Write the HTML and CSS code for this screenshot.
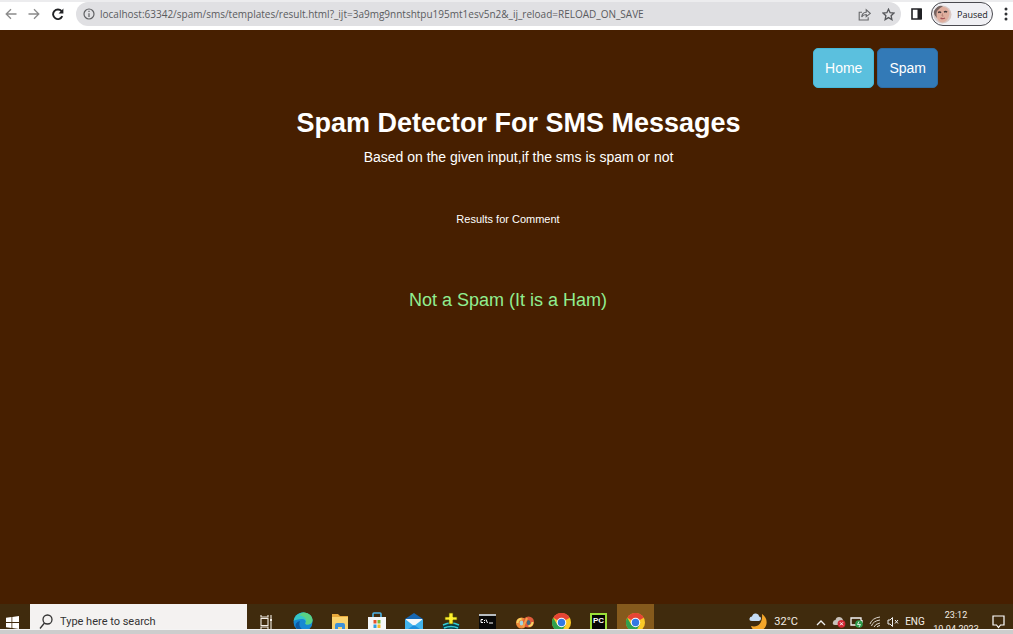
FILE: index.html
```html
<!DOCTYPE html>
<html lang="en">
<head>
<meta charset="utf-8">
<title>Spam Detector</title>
<link rel="stylesheet" href="styles.css">
</head>
<body>
<header class="toolbar">
  <button class="nav" aria-label="Back"><svg width="12" height="12" viewBox="0 0 12 12" fill="none" stroke="#8b8b8b" stroke-width="1.3"><path d="M11.5 6H1.5M6 1.2 1.2 6 6 10.8"/></svg></button>
  <button class="nav" aria-label="Forward"><svg width="12" height="12" viewBox="0 0 12 12" fill="none" stroke="#8b8b8b" stroke-width="1.3"><path d="M.5 6h10M6 1.2 10.8 6 6 10.8"/></svg></button>
  <button class="nav" aria-label="Reload"><svg width="12" height="13" viewBox="0 0 12 13" fill="none" stroke="#202124" stroke-width="1.9"><path d="M10.3 8.2A4.8 4.8 0 1 1 9.6 3.2"/><path d="M11.4.6v5H6.6z" fill="#202124" stroke="none"/></svg></button>
  <div class="address">
    <svg width="12" height="12" viewBox="0 0 12 12" fill="none" stroke="#606164" stroke-width="1.2"><circle cx="6" cy="6" r="5"/><path d="M6 5.2V9M6 2.8v1.3"/></svg>
    <input class="url" aria-label="Address" value="localhost:63342/spam/sms/templates/result.html?_ijt=3a9mg9nntshtpu195mt1esv5n2&amp;_ij_reload=RELOAD_ON_SAVE">
    <button class="mini" aria-label="Share"><svg width="13" height="13" viewBox="0 0 13 13" fill="none" stroke="#66676a" stroke-width="1.1"><path d="M4 4.2H1.2V12h9V9.2"/><path d="M3.7 9c.2-3 1.7-4.7 4.5-4.8V1.8L12.3 5.400 8.200 8.700V6.500C6 6.500 4.700 7.300 3.700 9z"/></svg></button>
    <button class="mini" aria-label="Bookmark"><svg width="13" height="13" viewBox="0 0 13 13" fill="none" stroke="#55565a" stroke-width="1.3"><path d="m6.500 1.200 1.600 3.500 3.800.4-2.800 2.600.8 3.900-3.400-2-3.400 2 .8-3.900L1.100 5.100l3.800-.4z"/></svg></button>
  </div>
  <button class="panel" aria-label="Side panel"><svg width="11" height="12" viewBox="0 0 11 12"><path d="M1 1h9v10H1z" fill="#fff" stroke="#202124" stroke-width="1.6"/><path d="M6.500 1H11v10H6.500z" fill="#202124"/></svg></button>
  <button class="profile"><svg width="19" height="19" viewBox="0 0 19 19"><circle cx="9.500" cy="9.500" r="9" fill="#d9c8c4"/><path d="M2 5Q6 .5 11 2q5 1 5.500 6-.3 5-3.500 8-4 3-7.500-.5Q2 11 2 5z" fill="#dfae9e"/><path d="M1 6Q5-.5 10 1.200 6 3 4 6q-1 3 0 7-4-3-3-7z" fill="#776460"/><path d="M5 7.500q2-1 3 .3M11 7q2-1 3 .2" stroke="#403638" stroke-width="1.400" fill="none"/><path d="M9.500 8.500 9 11h1.500" stroke="#b37f73" fill="none"/><path d="M7.500 13.200q2.500 1 4.500-.2" stroke="#a55255" stroke-width="1.300" fill="none"/></svg>Paused</button>
  <button class="more" aria-label="Menu"><svg width="4" height="14" viewBox="0 0 4 14" fill="#303134"><circle cx="2" cy="2" r="1.500"/><circle cx="2" cy="7" r="1.500"/><circle cx="2" cy="12" r="1.500"/></svg></button>
</header>

<main class="page">
  <nav class="links"><a class="btn home" href="#">Home</a><a class="btn spam" href="#">Spam</a></nav>
  <div class="intro">
    <h1>Spam Detector For SMS Messages</h1>
    <p class="lead">Based on the given input,if the sms is spam or not</p>
  </div>
  <p class="label">Results for Comment</p>
  <h2>Not a Spam (It is a Ham)</h2>
</main>

<footer class="taskbar">
  <div class="row">
    <button class="start" aria-label="Start"><svg width="13" height="13" viewBox="0 0 13 13" fill="#fff"><path d="M0 1.800 5.500 1v5H0zM6.300.9 13 0v6H6.300zM0 6.900h5.500v5L0 11.200zM6.300 6.900H13V13l-6.700-1z"/></svg></button>
    <label class="search"><svg width="14" height="16" viewBox="0 0 14 16" fill="none" stroke="#333" stroke-width="1.300"><circle cx="8.500" cy="5.500" r="4.500"/><path d="M5.500 9 1 14.500"/></svg><input placeholder="Type here to search" aria-label="Type here to search"></label>
    <button class="app" aria-label="Task view"><svg width="14" height="16" viewBox="0 0 14 16" fill="none" stroke="#f3eee6" stroke-width="1.100"><path d="M2 4.500h7v7H2zM2 1v2h7V1M2 15v-2h7v2M12 1v3M12 8v7"/><path d="M11 4.500h2v3h-2z" fill="#f3eee6" stroke="none"/></svg></button>
    <button class="app" aria-label="Edge"><svg width="20" height="20" viewBox="0 0 20 20"><circle cx="10" cy="10" r="9.500" fill="#1688d3"/><path d="M.6 9C1.500 3 6 .4 10.500.4c5.500 0 9 4 9 7.600 0 3-2.500 4.600-5 4.600-2 0-2.500-.8-2-1.600.8-1.500-.3-4-3.500-4-4 0-7 1-8.400 2z" fill="#35c5c6"/><path d="M10.500.4c5.500 0 9 4 9 7.600 0 3-2.500 4.600-5 4.600-2 0-2.500-.8-2-1.600 2-3-.5-7-6-7.500Q8 .6 10.500.4z" fill="#59d184"/><path d="M7 9c-2 5 1 9 6 9.500-7 2.500-12-3-10-7Q4.500 9 7 9z" fill="#0c59a4"/></svg></button>
    <button class="app" aria-label="File Explorer"><svg width="18" height="18" viewBox="0 0 18 18"><path d="M1 1h6l2 2h8v13H1z" fill="#e9a93b"/><path d="M1 4h16v13H1z" fill="#fbd36e"/><path d="M4 17v-5q0-2 2-2h6q2 0 2 2v5h-3v-3H7v3z" fill="#3d91d9"/></svg></button>
    <button class="app" aria-label="Store"><svg width="18" height="20" viewBox="0 0 18 20"><path d="M5 5V2q0-1 1-1h6q1 0 1 1v3" fill="none" stroke="#4db4e8" stroke-width="1.600"/><path d="M0 5h18v12q0 2-2 2H2q-2 0-2-2z" fill="#f4f6f8"/><path d="M5.500 8h3v3.500h-3z" fill="#e8512d"/><path d="M9.500 8h3v3.500h-3z" fill="#7bb832"/><path d="M5.500 12.500h3V16h-3z" fill="#2e9fe2"/><path d="M9.500 12.500h3V16h-3z" fill="#f5b928"/></svg></button>
    <button class="app" aria-label="Mail"><svg width="18" height="19" viewBox="0 0 18 19"><path d="M0 6 9 0l9 6v11H0z" fill="#1767b2"/><path d="M1 6h16v7H1z" fill="#f5f8fa"/><path d="m0 6 9 7 9-7v12H0z" fill="#42b4ee"/><path d="m0 18 9-6 9 6z" fill="#1e8edb"/></svg></button>
    <button class="app" aria-label="Downloads"><svg width="18" height="20" viewBox="0 0 18 20"><ellipse cx="9" cy="15" rx="8.500" ry="4.500" fill="#093e49"/><path d="M1 13q8-4 16 0M2 16q7-3 14 0M3 19q6-3 12 0" stroke="#35cad4" stroke-width="1.600" fill="none"/><path d="M7 1h4v4h4v3h-4v4H7V8H3V5h4z" fill="#fff02e" stroke="#514d00" stroke-width=".7"/></svg></button>
    <button class="app" aria-label="Command Prompt"><svg width="17" height="17" viewBox="0 0 17 17"><path d="M0 0h17v17H0z" fill="#090909"/><path d="M0 0h17v2H0z" fill="#b7bcc0"/><path d="M4 5.500H2v3h2M5.500 6v1M5.500 8v1M7 5.500l1.500 3.500M10 9h4" stroke="#fff" fill="none"/></svg></button>
    <button class="app" aria-label="Anaconda"><svg width="18" height="15" viewBox="0 0 18 15"><circle cx="5.500" cy="8" r="5.500" fill="#ef8b3b"/><circle cx="12.500" cy="7" r="5.500" fill="#df5b3b"/><path d="M1.500 8q0-4 4-4M12.500 11q4 0 4-4" stroke="#f7d463" stroke-width="2" fill="none"/><ellipse cx="5.500" cy="8" rx="1.800" ry="2.500" fill="#a5d5df"/><ellipse cx="12.500" cy="7.500" rx="1.800" ry="2.500" fill="#3d6980"/><path d="m7 12 4-9" stroke="#f4a247" stroke-width="2"/></svg></button>
    <button class="app" aria-label="Chrome"><svg width="19" height="19" viewBox="0 0 20 20"><circle cx="10" cy="10" r="10" fill="#fbc927"/><path d="M10 10 1.300 5A10 10 0 0 1 18.700 5z" fill="#e54435"/><path d="M1.300 5A10 10 0 0 0 10 20l4.300-7.500L10 10 5.700 12.500z" fill="#2fa14f"/><circle cx="10" cy="10" r="5" fill="#fff"/><circle cx="10" cy="10" r="3.900" fill="#3279e3"/></svg></button>
    <button class="app" aria-label="PyCharm"><span class="pc">PC</span></button>
    <button class="app active" aria-label="Chrome window"><svg width="19" height="19" viewBox="0 0 20 20"><circle cx="10" cy="10" r="10" fill="#fbc927"/><path d="M10 10 1.300 5A10 10 0 0 1 18.700 5z" fill="#e54435"/><path d="M1.300 5A10 10 0 0 0 10 20l4.300-7.500L10 10 5.700 12.500z" fill="#2fa14f"/><circle cx="10" cy="10" r="5" fill="#fff"/><circle cx="10" cy="10" r="3.900" fill="#3279e3"/></svg></button>
    <div class="tray">
      <button class="weather"><svg width="19" height="20" viewBox="0 0 19 20"><path d="M13 2c8 5 5 17-4 17-4 0-6-2-7-5 7 2 12-3 11-12z" fill="#f4a62a"/><path d="M3 9Q0 9 .5 6.500 1 4.500 3 4.500 4 1 7 1.500q3 .5 3 3 2 0 2 2T10 9z" fill="#c5dcf5"/></svg>32°C</button>
      <button class="ico" aria-label="Hidden icons"><svg width="10" height="7" viewBox="0 0 10 7" fill="none" stroke="#eee" stroke-width="1.300"><path d="m1 6 4-4 4 4"/></svg></button>
      <button class="ico" aria-label="Cloud sync"><svg width="14" height="12" viewBox="0 0 14 12"><path d="M3 9Q0 9 1 6q.5-2 2.500-2Q4 1 7 1t4 3v5z" fill="#c9c2ba"/><circle cx="9.500" cy="7.800" r="3.900" fill="#d42835"/><path d="m8 6.300 3 3m0-3-3 3" stroke="#fff"/></svg></button>
      <button class="ico" aria-label="Battery"><svg width="14" height="12" viewBox="0 0 14 12"><path d="M1 2h10v7H1zM12 4v3" fill="none" stroke="#f4f4f4" stroke-width="1.300"/><circle cx="9" cy="8" r="3.800" fill="#2f9b4b"/><path d="m9 5.500-1.500 3h3L9 11" stroke="#fff" stroke-width=".8" fill="none"/></svg></button>
      <button class="ico" aria-label="Network"><svg width="12" height="12" viewBox="0 0 12 12" fill="none" stroke="#ded7ce"><path d="M1 8Q3 2 11 1M2.500 10Q4 5 11 4M5 11Q6 8 11 7M8 11q.5-1 3-1.500"/></svg></button>
      <button class="ico" aria-label="Sound"><svg width="12" height="12" viewBox="0 0 12 12" fill="none" stroke="#eee"><path d="M1 4h2l2.500-2.500v9L3 8H1zM8 4l3 3.500M11 4 8 7.500"/></svg></button>
      <button class="lang">ENG</button>
      <button class="clock"><span>23:12</span><span>10-04-2023</span></button>
      <button class="notes" aria-label="Notifications"><svg width="13" height="14" viewBox="0 0 13 14" fill="none" stroke="#fff" stroke-width="1.200"><path d="M1 1h11v9H8.500L6.500 12.500 4.500 10H1z"/></svg></button>
    </div>
  </div>
</footer>
<div class="strip"></div>
</body>
</html>
```
FILE: styles.css
```css
* { box-sizing: border-box; }
body {
  margin: 0;
  min-height: 100vh;
  display: flex;
  flex-direction: column;
  background: #471f00;
  font-family: "Liberation Sans", Arial, sans-serif;
}
button {
  display: flex;
  align-items: center;
  justify-content: center;
  flex: none;
  margin: 0;
  padding: 0;
  border: 0;
  background: none;
  color: inherit;
  font: inherit;
}
svg { flex: none; display: block; }
h1, h2, p { margin: 0; }

.toolbar {
  display: flex;
  align-items: center;
  height: 30px;
  padding-bottom: 4px;
  background: #fff;
  border-top: 2px solid #ececee;
  font-family: "Open Sans", sans-serif;
}
.nav { width: 24px; height: 24px; }
.nav:first-child { width: 22px; }
.address {
  flex: 1;
  display: flex;
  align-items: center;
  height: 24px;
  margin-left: 6px;
  padding: 0 1px 0 7px;
  border-radius: 12px;
  background: #e0e0e3;
}
.url {
  flex: 1;
  min-width: 0;
  padding: 0 0 0 5px;
  border: 0;
  outline: 0;
  background: none;
  color: #5a5b5e;
  font: 10px/20px "Open Sans", sans-serif;
}
.mini { width: 24px; height: 24px; }
.panel { width: 30px; height: 24px; }
.profile {
  gap: 5px;
  height: 24px;
  width: 62px;
  justify-content: flex-start;
  padding-left: 1px;
  border: 1px solid #4a4a50;
  border-radius: 12px;
  background: #f0f0f4;
  color: #202124;
  font-size: 9px;
}
.more { width: 14px; height: 24px; margin-left: 6px; }

.page {
  flex: 1;
  display: flex;
  flex-direction: column;
  align-items: center;
  color: #fff;
  text-align: center;
}
.links {
  align-self: flex-end;
  display: flex;
  gap: 3px;
  margin: 18px 75px 0 0;
}
.btn {
  padding: 8px 11px;
  border: 1px solid;
  border-radius: 5px;
  color: #fff;
  font-size: 14px;
  line-height: 22px;
  text-decoration: none;
}
.home { background: #5bc0de; border-color: #46b8da; }
.spam { background: #337ab7; border-color: #2e6da4; }
.intro { padding: 16px 0 0 24px; }
h1 { font-size: 27px; line-height: 38px; }
.lead { font-size: 14px; line-height: 30px; }
.label { margin-top: 38px; padding-left: 3px; font-size: 11px; line-height: 18px; }
h2 {
  margin-top: 60px;
  padding-left: 3px;
  color: #90ee90;
  font-size: 18px;
  font-weight: 400;
  line-height: 24px;
}

.taskbar {
  height: 25px;
  overflow: hidden;
  background: #402b0d;
  color: #f4eee6;
  font-family: "Open Sans", sans-serif;
}
.row { display: flex; height: 36px; }
.start { width: 30px; padding-right: 6px; }
.search {
  display: flex;
  align-items: center;
  gap: 7px;
  width: 217px;
  padding-left: 9px;
  background: #f4f2f1;
}
.search input {
  flex: 1;
  min-width: 0;
  padding: 0;
  border: 0;
  background: none;
  font: 11px/20px Roboto, sans-serif;
}
.search input::placeholder { color: #333; opacity: 1; }
.app { width: 37px; }
.active { background: #855a1c; }
.pc {
  width: 17px;
  height: 19px;
  border: 2px solid #9bdf38;
  background: #050505;
  color: #fff;
  font: bold 8px/12px "Liberation Sans", sans-serif;
}
.tray { display: flex; margin-left: auto; font-size: 10px; }
.weather { gap: 6px; margin-right: 14px; font: 11px/20px Roboto, sans-serif; }
.ico { width: 18px; }
.lang { width: 26px; font: 10px/20px Roboto, sans-serif; }
.clock {
  flex-direction: column;
  width: 56px;
  font: 9px/14px Roboto, sans-serif;
}
.notes { width: 29px; }
.strip { height: 5px; border-top: 1px solid #f4f4f4; background: #cdcdcd; }
```
